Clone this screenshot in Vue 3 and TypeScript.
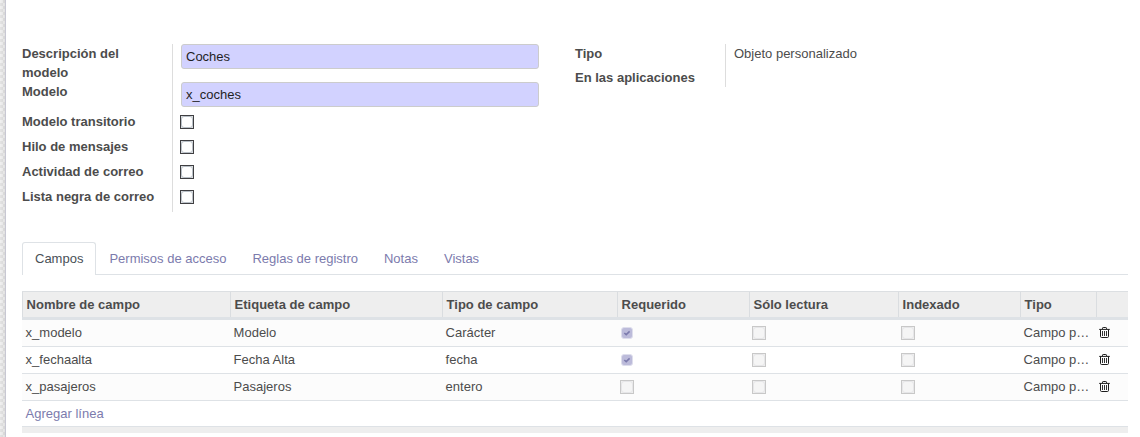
<script setup lang="ts">
interface Field {
  name: string
  label: string
  type: string
  required: boolean
  readonly: boolean
  indexed: boolean
  kind: string
}

const flags: string[] = ['Modelo transitorio', 'Hilo de mensajes', 'Actividad de correo', 'Lista negra de correo']
const tabs: string[] = ['Campos', 'Permisos de acceso', 'Reglas de registro', 'Notas', 'Vistas']
const columns: string[] = ['Nombre de campo', 'Etiqueta de campo', 'Tipo de campo', 'Requerido', 'Sólo lectura', 'Indexado', 'Tipo', '']
const fields: Field[] = [
  { name: 'x_modelo', label: 'Modelo', type: 'Carácter', required: true, readonly: false, indexed: false, kind: 'Campo p…' },
  { name: 'x_fechaalta', label: 'Fecha Alta', type: 'fecha', required: true, readonly: false, indexed: false, kind: 'Campo p…' },
  { name: 'x_pasajeros', label: 'Pasajeros', type: 'entero', required: false, readonly: false, indexed: false, kind: 'Campo p…' },
]
const checks = (f: Field): boolean[] => [f.required, f.readonly, f.indexed]
</script>

<template>
  <div class="page">
    <aside class="backdrop"></aside>
    <main class="sheet">
      <section class="groups">
        <div class="group main-group">
          <div class="labels">
            <div class="label desc">Descripción del modelo</div>
            <div class="label model">Modelo</div>
            <div v-for="f in flags" :key="f" class="label flag">{{ f }}</div>
          </div>
          <div class="values">
            <div class="input">Coches</div>
            <div class="input second">x_coches</div>
            <div class="boxes">
              <div v-for="f in flags" :key="f" class="box-row"><span class="box"></span></div>
            </div>
          </div>
        </div>
        <div class="group side-group">
          <div class="labels">
            <div class="label">Tipo</div>
            <div class="label apps">En las aplicaciones</div>
          </div>
          <div class="values plain">Objeto personalizado</div>
        </div>
      </section>

      <nav class="tabs">
        <a v-for="(t, i) in tabs" :key="t" class="tab" :class="{ active: i === 0 }">{{ t }}</a>
      </nav>

      <section class="table">
        <div class="row head">
          <div v-for="c in columns" :key="c" class="th">{{ c }}</div>
        </div>
        <div v-for="f in fields" :key="f.name" class="row body">
          <div class="td">{{ f.name }}</div>
          <div class="td">{{ f.label }}</div>
          <div class="td">{{ f.type }}</div>
          <div v-for="(on, i) in checks(f)" :key="i" class="td check">
            <svg v-if="on" class="tick" viewBox="0 0 12 12">
              <rect x="0.5" y="0.5" width="11" height="11" rx="2.5" fill="#bcbbda" stroke="#dedeec" />
              <path d="M3.3 6 L5.2 7.6 L8.6 4.4" fill="none" stroke="#7c7bad" stroke-width="1.6" />
            </svg>
            <span v-else class="box muted"></span>
          </div>
          <div class="td kind">{{ f.kind }}</div>
          <div class="td bin">
            <svg viewBox="0 0 11 11" fill="none" stroke="#1c1c1c">
              <path d="M0.2 2.4 H10.8" />
              <path d="M3.5 2.2 V1.2 Q3.5 0.5 4.2 0.5 H6.8 Q7.5 0.5 7.5 1.2 V2.2" />
              <path d="M1.5 2.5 V9.4 Q1.5 10.5 2.6 10.5 H8.4 Q9.5 10.5 9.5 9.4 V2.5" />
              <path d="M3.5 4 V9 M5.5 4 V9 M7.5 4 V9" stroke-width="0.9" />
            </svg>
          </div>
        </div>
        <div class="add"><a>Agregar línea</a></div>
        <div class="foot"></div>
      </section>
    </main>
  </div>
</template>

<style>
body {
  background: #fff;
  overflow: hidden;
}
</style>

<style scoped>
.page {
  display: flex;
  height: 437px;
  overflow: hidden;
  font-family: "Liberation Sans", Arial, sans-serif;
  font-size: 13px;
  line-height: 19px;
  color: #4c4c4c;
}
.page *,
.page *::before {
  box-sizing: border-box;
}
.backdrop {
  width: 6px;
  flex: none;
  border-right: 1px solid #c8c8d3;
  background:
    linear-gradient(to right, rgba(0, 0, 0, 0), rgba(0, 0, 0, 0.06)),
    repeating-conic-gradient(#e3e3e3 0 25%, #f0f0f0 0 50%) 0 0 / 6px 6px;
}
.sheet {
  width: 1122px;
  flex: none;
  padding: 44px 0 0 16px;
}
.groups {
  display: flex;
  align-items: flex-start;
  height: 198px;
}
.group {
  display: flex;
}
.main-group {
  width: 553px;
  height: 168px;
}
.labels {
  width: 150px;
  flex: none;
  font-weight: bold;
}
.label {
  line-height: 19px;
}
.desc {
  width: 130px;
  height: 38px;
}
.model {
  height: 27px;
}
.flag {
  height: 25px;
  padding-top: 3px;
}
.apps {
  margin-top: 5px;
}
.values {
  width: 367px;
  border-left: 1px solid #ddd;
  padding-left: 8px;
}
.input {
  width: 358px;
  height: 25px;
  padding: 0 4px;
  border: 1px solid #ccc;
  border-radius: 3px;
  background: #d2d2ff;
  color: #1f1f1f;
  line-height: 24px;
}
.second {
  margin-top: 13px;
}
.boxes {
  margin: 8px 0 0 -1px;
}
.box-row {
  height: 25px;
}
.box {
  display: block;
  width: 14px;
  height: 14px;
  border: 1px solid #3f3f42;
  background: #dfe2e5;
}
.box::before {
  content: "";
  display: block;
  width: 12px;
  height: 12px;
  border: 1px solid #b9c0c7;
  border-radius: 3px;
  background: #fff;
}
.side-group {
  height: 43px;
}
.side-group .values {
  width: 300px;
}
.tabs {
  display: flex;
  height: 33px;
  border-bottom: 1px solid #dee2e6;
}
.tab {
  height: 33px;
  padding: 6px 12px 0;
  border: 1px solid transparent;
  border-bottom: 0;
  color: #7c7bad;
}
.tab.active {
  border-color: #dee2e6;
  border-radius: 3px 3px 0 0;
  background: #fff;
  color: #495057;
}
.table {
  margin-top: 16px;
}
.row {
  display: grid;
  grid-template-columns: 208px 212px 175px 132px 149px 122px 76px 32px;
}
.head {
  height: 29px;
  border-top: 1px solid #dcdfe2;
  border-bottom: 3px solid #dee2e6;
  background: #eee;
  font-weight: bold;
}
.th {
  padding: 3px 0 0 3.6px;
  border-left: 1px solid #dadde0;
}
.body {
  height: 27px;
  border-bottom: 1px solid #dee2e6;
}
.body:nth-child(even) {
  background: #fcfcfc;
}
.td {
  padding: 3px 0 0 3.6px;
  white-space: nowrap;
}
.check {
  padding: 6px 0 0 3px;
}
.tick {
  display: block;
  width: 12px;
  height: 12px;
  margin: 1px 0 0 1px;
}
.muted {
  border-color: #c8c8c8;
  background: #efefef;
}
.muted::before {
  border-color: #e6e6e8;
  background: #f5f5f5;
}
.bin {
  padding: 7px 0 0 3px;
}
.bin svg {
  display: block;
  width: 11px;
  height: 11px;
}
.add {
  height: 26px;
  padding: 3px 0 0 3.6px;
  border-bottom: 1px solid #dee2e6;
  color: #7c7bad;
}
.foot {
  height: 6px;
  background: #eee;
}
</style>
